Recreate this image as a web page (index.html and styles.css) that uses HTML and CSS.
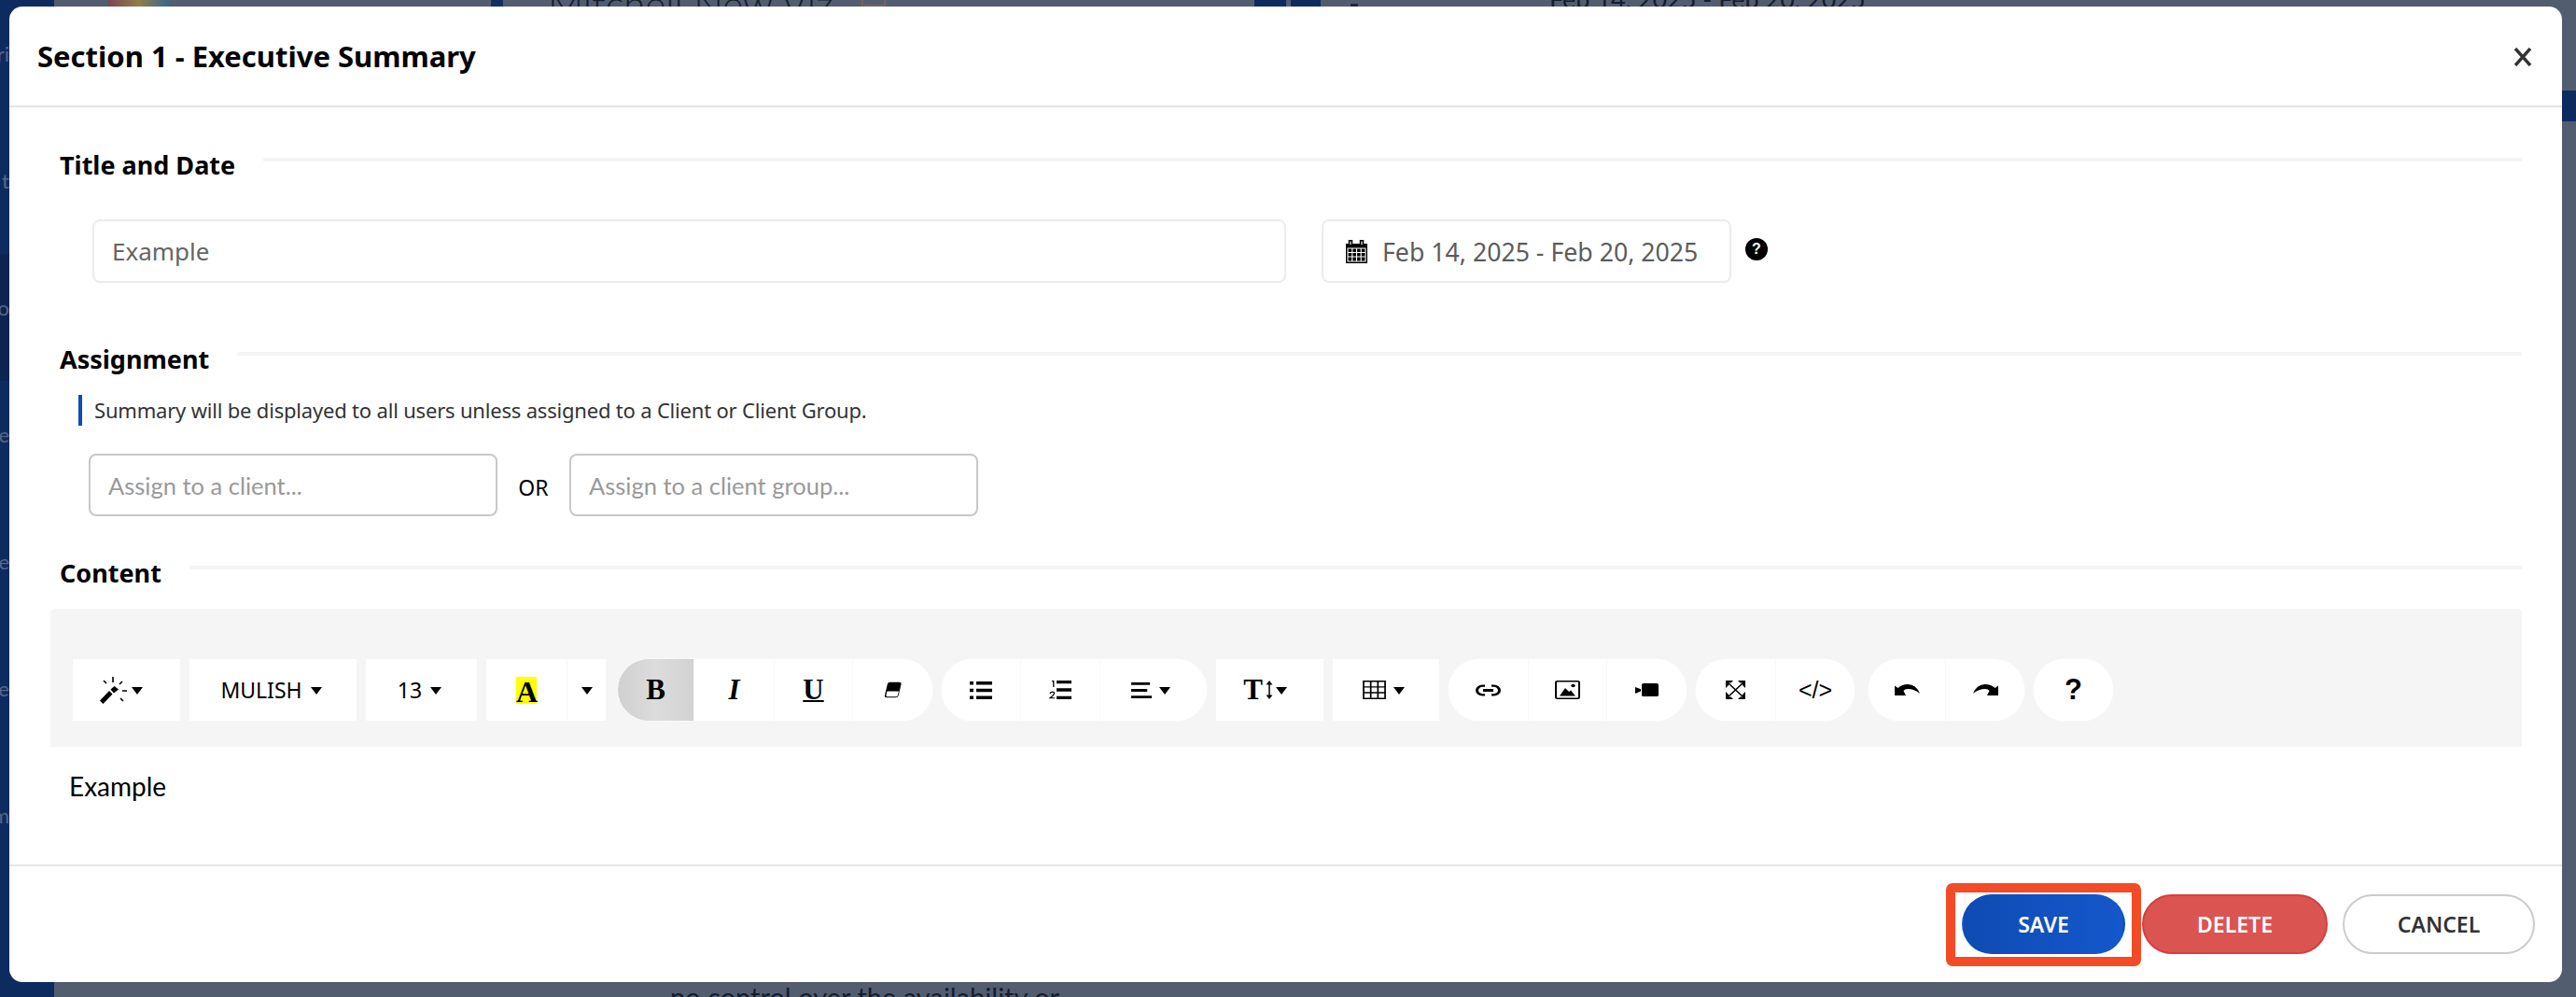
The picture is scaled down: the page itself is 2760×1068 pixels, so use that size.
FILE: index.html
```html
<!DOCTYPE html>
<html lang="en">
<head>
  <meta charset="UTF-8" />
  <title>Section 1 - Executive Summary</title>
  <link rel="stylesheet" href="styles.css">
</head>
<body>

<!-- page behind the modal, mostly hidden by it -->
<div class="backdrop">
  <div class="sidebar">
    <span class="side-item">ri</span>
    <span class="side-item">t</span>
    <span class="side-item side-active">o</span>
    <span class="side-item">e</span>
    <span class="side-item">e</span>
    <span class="side-item">ve</span>
    <span class="side-item">m</span>
  </div>
  <div class="peek peek-logo"></div>
  <div class="peek peek-chevron"></div>
  <div class="peek peek-mark"></div>
  <div class="peek peek-block-a"></div>
  <div class="peek peek-block-b"></div>
  <div class="peek peek-dot"></div>
  <div class="peek peek-title">Mitchell New Viz</div>
  <div class="peek peek-date">Feb 14, 2025 - Feb 20, 2025</div>
  <div class="peek peek-tab"></div>
  <div class="peek peek-text">no control over the availability or</div>
</div>

<div class="modal">
  <div class="modal-header">
    <h1 class="modal-title">Section 1 - Executive Summary</h1>
    <svg class="close-icon" viewBox="0 0 20 20"><path d="M2 1 L18 19 M18 1 L2 19" stroke="#333" stroke-width="3.4" fill="none"/></svg>
  </div>

  <div class="modal-body">
    <div class="section-head title-head">
      <span class="section-title">Title and Date</span>
      <span class="section-rule"></span>
    </div>
    <div class="title-row">
      <input class="text-input title-input" type="text" value="Example">
      <div class="date-input">
        <svg class="cal-icon" viewBox="0 0 23 25">
          <path d="M0 4 H23 V25 H0 Z" fill="#000"/>
          <path d="M5 0.5 V6 M17 0.5 V6" stroke="#000" stroke-width="4.5" stroke-linecap="round"/>
          <path d="M5 1.5 V5 M17 1.5 V5" stroke="#fff" stroke-width="1.2"/>
          <path d="M2 9 H21 V23 H2 Z M2 13.5 H21 M2 18 H21 M6.8 9 V23 M11.5 9 V23 M16.2 9 V23" stroke="#fff" stroke-width="1.1" fill="none"/>
        </svg>
        <span>Feb 14, 2025 - Feb 20, 2025</span>
      </div>
      <span class="help-dot">?</span>
    </div>

    <div class="section-head assign-head">
      <span class="section-title">Assignment</span>
      <span class="section-rule"></span>
    </div>
    <p class="note">Summary will be displayed to all users unless assigned to a Client or Client Group.</p>
    <div class="assign-row">
      <input class="text-input assign-input" type="text" placeholder="Assign to a client...">
      <span class="or-label">OR</span>
      <input class="text-input assign-input" type="text" placeholder="Assign to a client group...">
    </div>

    <div class="section-head content-head">
      <span class="section-title">Content</span>
      <span class="section-rule"></span>
    </div>

    <div class="toolbar">
      <div class="tb-group">
        <button class="tb-btn w-magic">
          <svg class="ic" width="29" height="29" viewBox="0 0 29 29">
            <path d="M0 25.5 L10 15 L13.5 18.5 L3.5 29 Z M11.5 13.5 L15.5 10 L20 13.5 L15 17.5 Z" fill="#000"/>
            <path d="M14 0 V6 M4 4 L7 7 M24 5 L21 8 M24 15 H29 M22 23 L25 26" stroke="#000" stroke-width="1.6"/>
          </svg>
          <i class="caret"></i>
        </button>
      </div>
      <div class="tb-group"><button class="tb-btn w-font"><span class="tb-text">MULISH</span><i class="caret"></i></button></div>
      <div class="tb-group"><button class="tb-btn w-size"><span class="tb-text">13</span><i class="caret"></i></button></div>
      <div class="tb-group">
        <button class="tb-btn w-color"><span class="color-a">A</span></button>
        <button class="tb-btn w-color-caret"><i class="caret"></i></button>
      </div>

      <div class="tb-group tb-round bold-group">
        <button class="tb-btn w-bold is-active"><span class="serif-b">B</span></button>
        <button class="tb-btn w-86"><span class="serif-i">I</span></button>
        <button class="tb-btn w-84"><span class="serif-u">U</span></button>
        <button class="tb-btn w-85">
          <svg class="ic" width="19" height="18" viewBox="0 0 20 24" preserveAspectRatio="none"><path d="M7 1 H17 Q20 1 19.5 4 L16.5 20 Q16 23 13 23 H4 Q0.5 23 1 20 L4 4 Q4.5 1 7 1 Z" fill="#000"/><path d="M3.6 14 H16.8 L15.4 20.5 Q15.2 21.5 13.6 21.5 H3.8 Q2.3 21.5 2.5 20 Z" fill="#fff"/></svg>
        </button>
      </div>

      <div class="tb-group tb-round">
        <button class="tb-btn w-85">
          <svg class="ic" width="24" height="19" viewBox="0 0 24 22" preserveAspectRatio="none"><path d="M0 0 H4 V4 H0 Z M0 9 H4 V13 H0 Z M0 18 H4 V22 H0 Z M7 0 H24 V4 H7 Z M7 9 H24 V13 H7 Z M7 18 H24 V22 H7 Z" fill="#000"/></svg>
        </button>
        <button class="tb-btn w-85">
          <svg class="ic" width="24" height="20" viewBox="0 0 24 24" preserveAspectRatio="none"><path d="M8 0 H24 V4 H8 Z M8 10 H24 V14 H8 Z M8 20 H24 V24 H8 Z" fill="#000"/><path d="M3 1 L4.8 0 V8.5 M1 17 Q1.5 14.5 3.4 14.5 Q5.5 14.5 5.5 16.5 Q5.5 18.5 1 22.5 H6" stroke="#000" stroke-width="1.3" fill="none"/></svg>
        </button>
        <button class="tb-btn w-114">
          <svg class="ic" width="22" height="17" viewBox="0 0 23 21" preserveAspectRatio="none"><path d="M0 0 H21 V3.5 H0 Z M0 8.7 H18 V12.2 H0 Z M0 17.5 H23 V21 H0 Z" fill="#000"/></svg>
          <i class="caret"></i>
        </button>
      </div>

      <div class="tb-group">
        <button class="tb-btn w-115"><span class="serif-t">T</span>
          <svg class="ic" width="8" height="20" viewBox="0 0 8 26" preserveAspectRatio="none"><path d="M4 2 V24" stroke="#000" stroke-width="1.5"/><path d="M0.5 6 L4 0 L7.5 6 Z M0.5 20 L4 26 L7.5 20 Z" fill="#000"/></svg>
          <i class="caret"></i>
        </button>
      </div>
      <div class="tb-group">
        <button class="tb-btn w-114">
          <svg class="ic" width="25" height="20" viewBox="0 0 26 25" preserveAspectRatio="none"><path d="M1 1 H25 V24 H1 Z M1 8.6 H25 M1 16.3 H25 M9 1 V24 M17 1 V24" stroke="#000" stroke-width="1.8" fill="none"/></svg>
          <i class="caret"></i>
        </button>
      </div>

      <div class="tb-group tb-round">
        <button class="tb-btn w-86">
          <svg class="ic" width="27" height="13" viewBox="0 0 27 16" preserveAspectRatio="none"><path d="M10 2 H7.5 A6 6 0 0 0 7.5 14 H10 M17 2 H19.5 A6 6 0 0 1 19.5 14 H17" stroke="#000" stroke-width="3" fill="none"/><path d="M8 6.2 H19 V9.8 H8 Z" fill="#000"/></svg>
        </button>
        <button class="tb-btn w-84">
          <svg class="ic" width="27" height="20" viewBox="0 0 27 25" preserveAspectRatio="none"><rect x="1" y="1" width="25" height="23" rx="1.5" stroke="#000" stroke-width="2" fill="none"/><path d="M5 20.5 L11 10 L15 15 L17 13 L22 20.5 Z" fill="#000"/><circle cx="19.5" cy="7" r="2.2" fill="#000"/></svg>
        </button>
        <button class="tb-btn w-85">
          <svg class="ic" width="25" height="14" viewBox="0 0 25 18" preserveAspectRatio="none"><path d="M0 5 L6 8 V11 L0 14 Z" fill="#000"/><rect x="7" y="0" width="18" height="18" rx="2" fill="#000"/></svg>
        </button>
      </div>

      <div class="tb-group tb-round">
        <button class="tb-btn w-86">
          <svg class="ic" width="21" height="20" viewBox="0 0 21 20"><path d="M3 3 L18 17 M18 3 L3 17" stroke="#000" stroke-width="1.6"/><path d="M0 0 H8 L5.5 2.5 H3 V5 L0 8 Z M21 0 H13 L15.5 2.5 H18 V5 L21 8 Z M0 20 H8 L5.5 17.5 H3 V15 L0 12 Z M21 20 H13 L15.5 17.5 H18 V15 L21 12 Z" fill="#000"/></svg>
        </button>
        <button class="tb-btn w-84"><span class="code-text">&lt;/&gt;</span></button>
      </div>

      <div class="tb-group tb-round undo-group">
        <button class="tb-btn w-83">
          <svg class="ic" width="27" height="12" viewBox="0 0 27 12"><path d="M0 1.5 L3.5 4 Q8 0 14 0 Q23 0 27 10 Q21 5 14 5 Q10.5 5 9.5 7 L12 12 H0 Z" fill="#000"/></svg>
        </button>
        <button class="tb-btn w-84">
          <svg class="ic" width="27" height="12" viewBox="0 0 27 12"><path d="M27 1.5 L23.5 4 Q19 0 13 0 Q4 0 0 10 Q6 5 13 5 Q16.5 5 17.5 7 L15 12 H27 Z" fill="#000"/></svg>
        </button>
      </div>

      <div class="tb-group tb-round"><button class="tb-btn w-85"><span class="help-text">?</span></button></div>
    </div>

    <div class="editor">Example</div>
  </div>

  <div class="modal-footer">
    <span class="save-mark"><button class="btn btn-save">SAVE</button></span>
    <button class="btn btn-delete">DELETE</button>
    <button class="btn btn-cancel">CANCEL</button>
  </div>
</div>

</body>
</html>
```

FILE: styles.css
```css
* {
  margin: 0; padding: 0; box-sizing: border-box;
}

body {
  font-family: 'Noto Sans', sans-serif;
  background: #535d70;
  width: 2760px;
  height: 1068px;
  overflow: hidden;
  position: relative;
  color: #000;
}

/* what shows around the modal */
.backdrop {
  position: absolute;
  inset: 0;
  overflow: hidden;
}

.sidebar {
  position: absolute;
  left: 0;
  top: 0;
  bottom: 0;
  width: 58px;
  background: #0e2b60;
  display: flex;
  flex-direction: column;
}

.side-item {
  height: 136px;
  padding-top: 46px;
  width: 10px;
  font-family: 'Lato', sans-serif;
  font-size: 22px;
  line-height: 24px;
  color: #56678a;
  white-space: nowrap;
  direction: rtl;
  overflow: hidden;
}

.side-active {
  background: #0d2450;
}

.peek {
  position: absolute;
  white-space: nowrap;
}

.peek-logo {
  left: 115px;
  top: 0;
  width: 67px;
  height: 7px;
  background: linear-gradient(90deg, #8a3b4a 0%, #b08a3a 50%, #2a6a9a 100%);
  opacity: 0.7;
}

.peek-chevron {
  left: 526px;
  top: 0;
  width: 13px;
  height: 7px;
  background: #12305f;
}

.peek-mark {
  left: 923px;
  top: 0;
  width: 26px;
  height: 7px;
  border: 2px solid #7a5f55;
  border-top: none;
}

.peek-block-a {
  left: 1344px;
  top: 0;
  width: 34px;
  height: 7px;
  background: #0e2b60;
}

.peek-block-b {
  left: 1383px;
  top: 0;
  width: 32px;
  height: 7px;
  background: #0e2b60;
}

.peek-dot {
  left: 1447px;
  top: 4px;
  width: 8px;
  height: 3px;
  background: #1d2740;
}

.peek-title {
  left: 587px;
  top: -17px;
  font-family: 'Lato', sans-serif;
  font-size: 42px;
  line-height: 42px;
  font-weight: 300;
  color: #151c2e;
}

.peek-date {
  left: 1660px;
  top: -14px;
  font-family: 'Lato', sans-serif;
  font-size: 27px;
  line-height: 26px;
  color: #151c2e;
}

.peek-tab {
  right: 0;
  top: 97px;
  width: 15px;
  height: 33px;
  background: #0e2b60;
}

.peek-text {
  left: 718px;
  top: 1052px;
  font-family: 'Lato', sans-serif;
  font-size: 29px;
  line-height: 32px;
  color: #151c2e;
}

.modal {
  position: absolute;
  left: 10px;
  top: 7px;
  width: 2735px;
  height: 1045px;
  background: #fff;
  border-radius: 14px;
  display: flex;
  flex-direction: column;
}

.modal-header {
  height: 108px;
  flex: none;
  border-bottom: 2px solid #e5e5e5;
  padding: 0 32px 0 30px;
  display: flex;
  align-items: center;
  justify-content: space-between;
}

.modal-title {
  font-size: 31px;
  font-weight: 700;
  line-height: 40px;
  margin-top: -1px;
}

.close-icon {
  width: 20px;
  height: 20px;
  margin-top: 2px;
}

.modal-body {
  flex: 1;
  padding: 0 43px 0 44px;
}

.section-head {
  display: flex;
  align-items: flex-start;
  gap: 30px;
}

.title-head { padding-top: 44px; }
.assign-head { margin-top: 64px; }
.content-head { margin-top: 43px; }

.section-title {
  font-size: 27px;
  font-weight: 700;
  line-height: 36px;
  margin-left: 10px;
}

.section-rule {
  flex: 1;
  height: 4px;
  background: #f5f5f5;
  margin-top: 10px;
}

.title-row {
  display: flex;
  align-items: flex-start;
  margin-top: 40px;
  padding-left: 45px;
}

.text-input {
  font-family: 'Noto Sans', sans-serif;
  font-size: 26px;
  border-radius: 8px;
  outline: none;
  background: #fff;
}

.title-input {
  width: 1279px;
  height: 68px;
  border: 2px solid #ececec;
  padding: 0 19px;
  color: #666;
}

.date-input {
  margin-left: 38px;
  width: 439px;
  height: 68px;
  border: 2px solid #ececec;
  border-radius: 8px;
  display: flex;
  align-items: center;
  padding-left: 24px;
  font-size: 26.7px;
  color: #5c5c5c;
}

.cal-icon {
  width: 23px;
  height: 25px;
  margin-right: 16px;
}

.help-dot {
  margin-left: 15px;
  margin-top: 20px;
  width: 24px;
  height: 24px;
  border-radius: 50%;
  background: #000;
  color: #fff;
  font-family: 'Liberation Sans', sans-serif;
  font-size: 16px;
  font-weight: 700;
  line-height: 24px;
  text-align: center;
}

.note {
  margin: 20px 0 0 30px;
  border-left: 4px solid #0f4bb3;
  height: 33px;
  padding-left: 13px;
  font-size: 22px;
  letter-spacing: -0.19px;
  line-height: 33px;
  color: #333;
}

.assign-row {
  display: flex;
  align-items: center;
  margin-top: 30px;
  padding-left: 41px;
}

.assign-input {
  width: 438px;
  height: 67px;
  border: 2px solid #c8c8c8;
  padding: 0 19px;
  font-family: 'Lato', sans-serif;
  font-size: 25.5px;
}

.assign-input::placeholder {
  color: #999;
}

.or-label {
  width: 77px;
  text-align: center;
  font-size: 23px;
  margin-top: 4px;
}

.toolbar {
  margin-top: 20px;
  height: 148px;
  background: #f5f5f5;
  border-radius: 5px 5px 0 0;
  display: flex;
  align-items: flex-start;
  gap: 10px;
  padding: 54px 0 0 24px;
}

.tb-group {
  display: flex;
  height: 66px;
  background: #fff;
  overflow: hidden;
}

.tb-round {
  border-radius: 33px;
  box-shadow: 0 0 0 1px #f8f8f8;
}

.bold-group { margin-left: 3px; }
.undo-group { margin-left: 5px; }

.tb-btn {
  height: 100%;
  flex: none;
  background: #fff;
  border: none;
  border-right: 1px solid #f8f8f8;
  display: flex;
  align-items: center;
  justify-content: center;
  gap: 5px;
  color: #000;
  font-family: 'Lato', sans-serif;
}

.tb-btn:last-child { border-right: none; }

.is-active {
  background: linear-gradient(90deg, #d0d0d0 0%, #dcdcdc 50%, #d2d2d2 100%);
}

.w-magic { width: 115px; padding-right: 12px; }
.w-font { width: 179px; gap: 9px; padding-right: 4px; }
.w-size { width: 119px; gap: 9px; padding-right: 4px; }
.w-color { width: 87px; }
.w-color-caret { width: 41px; }
.w-bold { width: 82px; }
.w-83 { width: 83px; }
.w-84 { width: 84px; }
.w-85 { width: 85px; }
.w-86 { width: 86px; }
.w-114 { width: 114px; gap: 8px; padding-right: 6px; }
.w-115 { width: 115px; gap: 3px; padding-right: 10px; }

.caret {
  width: 0;
  height: 0;
  border-left: 6px solid transparent;
  border-right: 6px solid transparent;
  border-top: 8.5px solid #000;
  margin-top: 2px;
}

.tb-text {
  font-family: 'Noto Sans', sans-serif;
  font-size: 23px;
}

.color-a {
  font-family: 'Liberation Serif', serif;
  font-weight: 700;
  font-size: 32px;
  line-height: 33px;
  width: 22px;
  height: 29px;
  text-align: center;
  background: #ff0;
}

.serif-b, .serif-i, .serif-u, .serif-t {
  font-family: 'Liberation Serif', serif;
  font-weight: 700;
  font-size: 31px;
  line-height: 32px;
}

.serif-i { font-style: italic; }

.serif-u { text-decoration: underline; text-decoration-thickness: 2px; }

.code-text {
  font-family: 'Liberation Sans', sans-serif;
  font-size: 25px;
}

.help-text {
  font-family: 'Liberation Sans', sans-serif;
  font-weight: 700;
  font-size: 31px;
}

.editor {
  font-family: 'Lato', sans-serif;
  font-size: 28px;
  line-height: 34px;
  padding: 25px 0 0 20px;
}

.modal-footer {
  flex: none;
  height: 126px;
  border-top: 2px solid #e5e5e5;
  display: flex;
  align-items: center;
  justify-content: flex-end;
  padding: 0 29px 0 0;
}

.btn {
  height: 64px;
  border-radius: 32px;
  font-family: 'Noto Sans', sans-serif;
  font-size: 23px;
  font-weight: 600;
  border: 2px solid transparent;
}

.save-mark {
  border: 10px solid #f44b27;
  border-radius: 7px;
  width: 209px;
  height: 89px;
  display: flex;
  align-items: center;
  justify-content: center;
  margin-right: 1px;
}

.btn-save {
  width: 175px;
  color: #fff;
  background: linear-gradient(90deg, #0f4bb3 0%, #1557cc 100%);
}

.btn-delete {
  width: 199px;
  color: #fff;
  background: #da5552;
  border-color: #d4403f;
}

.btn-cancel {
  width: 206px;
  margin-left: 16px;
  color: #333;
  background: #fff;
  border-color: #ccc;
}
```
